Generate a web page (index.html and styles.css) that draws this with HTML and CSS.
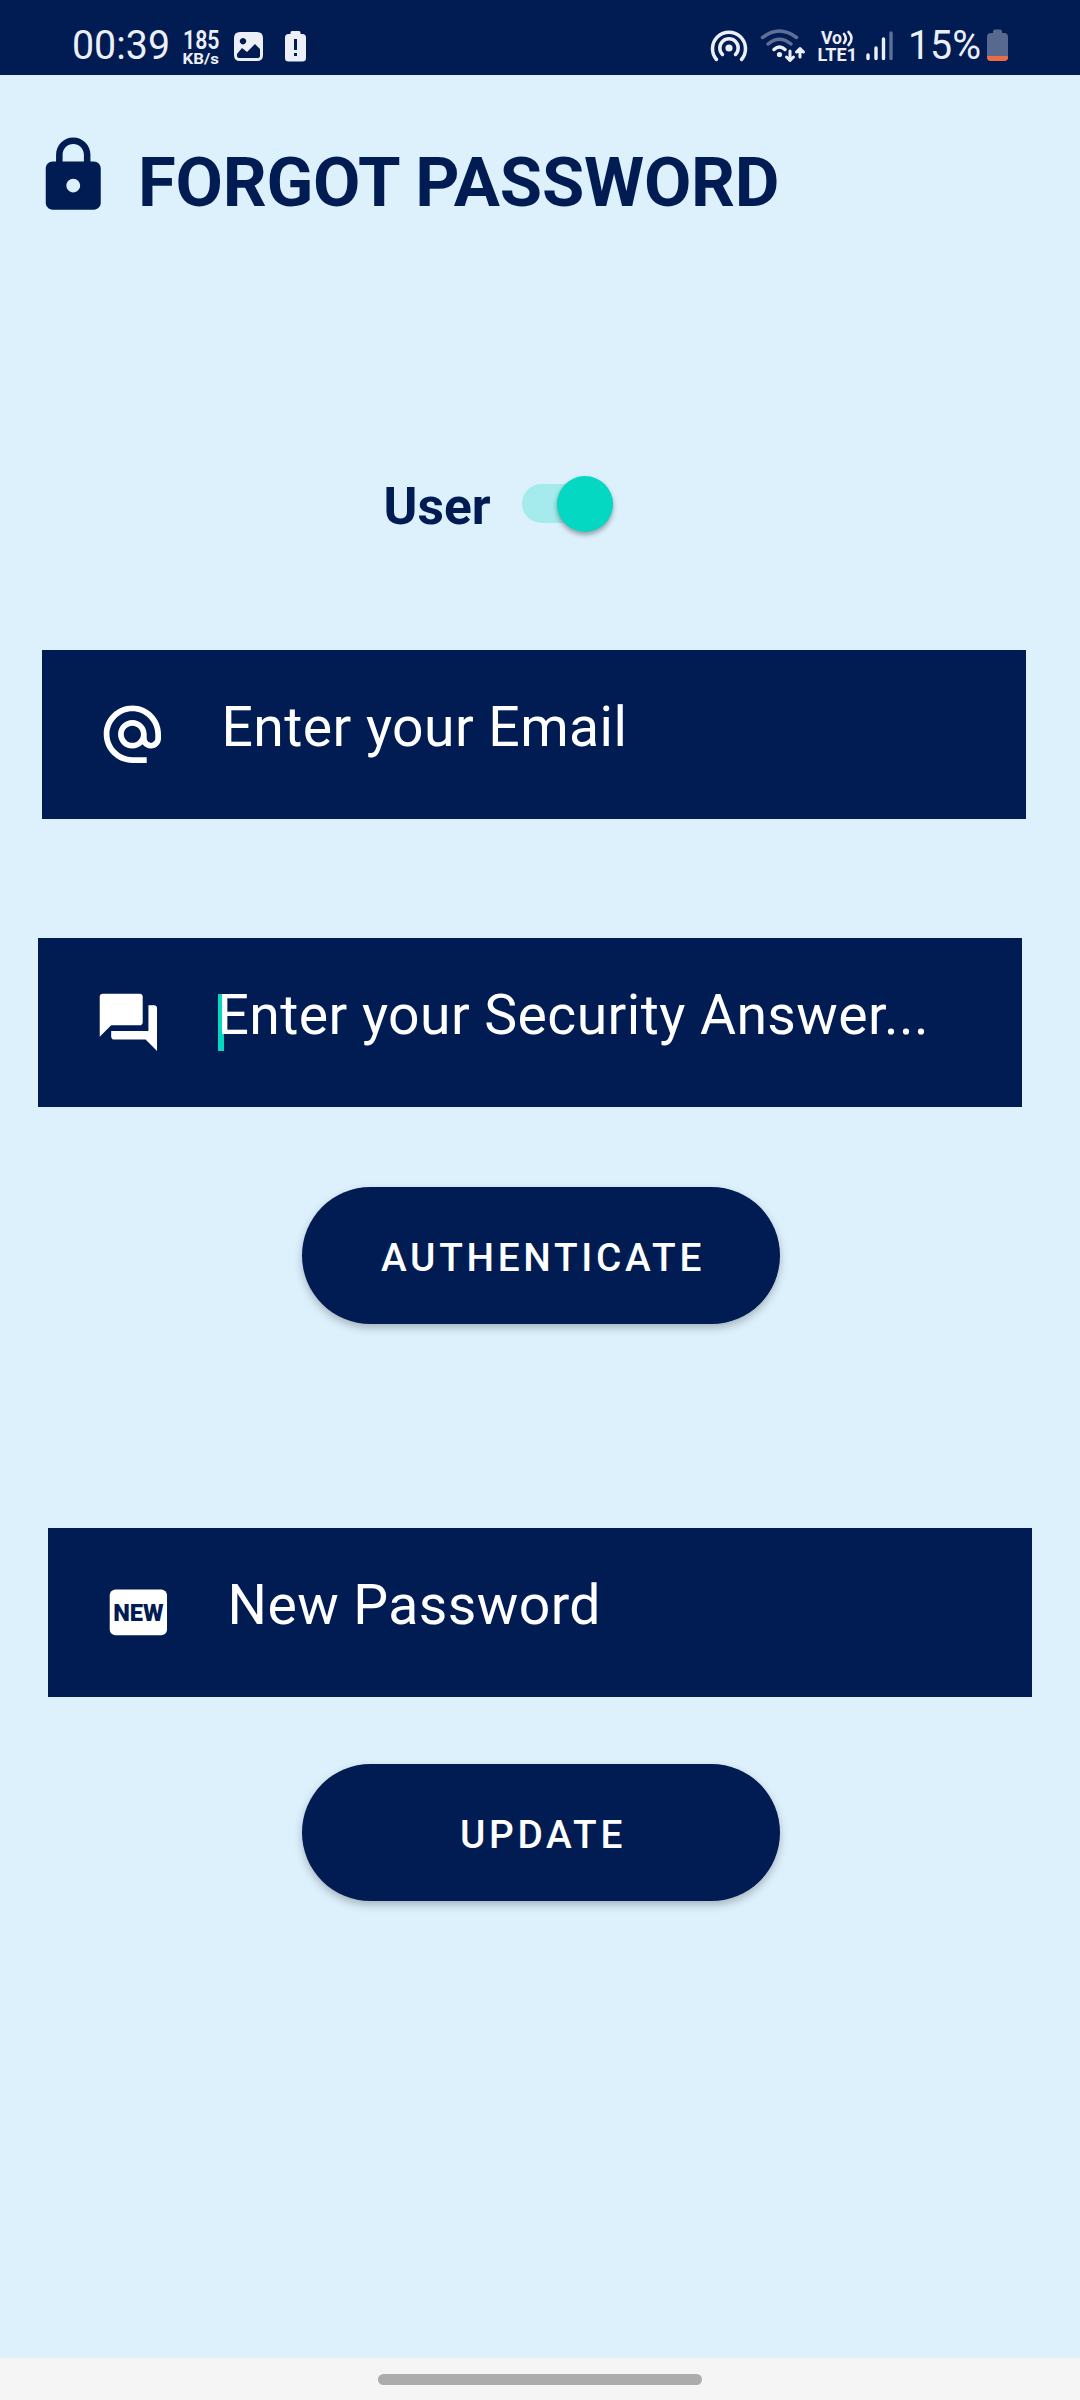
FILE: index.html
```html
<!DOCTYPE html>
<html lang="en">
<head>
<meta charset="utf-8">
<title>Forgot Password</title>
<link rel="stylesheet" href="styles.css">
</head>
<body>
<header class="status">
  <svg class="status-left" width="250" height="75" viewBox="60 0 250 75">
    <text x="72" y="59" font-size="40" textLength="98" lengthAdjust="spacingAndGlyphs">00:39</text>
    <text x="183" y="49" font-size="25.5" font-weight="600" textLength="36.500" lengthAdjust="spacingAndGlyphs">185</text>
    <text x="182.500" y="63.500" font-size="15" font-weight="700" textLength="36.500" lengthAdjust="spacingAndGlyphs">KB/s</text>
    <path fill-rule="evenodd" d="M240 32h17q6 0 6 6v17q0 6-6 6h-17q-6 0-6-6v-17q0-6 6-6zM243 38a3.200 3.200 0 1 0 .01 0zM237 54v2q0 2 2 2h19q2 0 2-2v-7l-5-5-8 8-5-4z"/>
    <path fill-rule="evenodd" d="M292 31h7q1.500 0 1.500 1.500V34h2q3.500 0 3.500 3.500V58q0 3.500-3.500 3.500h-14q-3.500 0-3.500-3.500V37.500q0-3.500 3.500-3.500h2v-1.500q0-1.500 1.500-1.500zM294 39v11h3V39zM294 53v3h3v-3z"/>
  </svg>
  <svg class="status-right" width="310" height="75" viewBox="705 0 310 75">
    <g class="line" stroke-width="3.500">
      <path d="M716.500 59.500A16.500 16.500 0 1 1 741.500 59.500"/>
      <path d="M722.500 54.500A9.200 9.200 0 1 1 735.500 54.500"/>
    </g>
    <circle cx="729" cy="48" r="3.600"/>
    <g class="line" stroke-width="3.500">
      <path class="dim" d="M762.500 37.500Q779.500 24.500 796.500 37.500M768 44Q779.500 34.500 791 44"/>
      <path d="M774 49.500Q779.500 44.500 785 49.500"/>
    </g>
    <circle cx="779.500" cy="54.500" r="2.600"/>
    <path class="line" stroke-width="3" d="M790 51v9M786.500 57l3.500 3.500 3.500-3.500M800 57V49M796.500 52l3.500-3.500 3.500 3.500"/>
    <text x="821" y="44" font-size="17.500" font-weight="700" textLength="21" lengthAdjust="spacingAndGlyphs">Vo</text>
    <path class="line" stroke-width="2.600" d="M844 34q3.500 4.500 0 9M848.500 32q6 6.500 0 13"/>
    <text x="817.500" y="61" font-size="18.500" font-weight="700" textLength="39.500" lengthAdjust="spacingAndGlyphs">LTE1</text>
    <path class="line" stroke-width="3.400" d="M868 55v3.500M876 48v10.500M883.500 39v19.500"/>
    <path class="line dim" stroke-width="3.400" d="M891 33v25.500"/>
    <text x="908" y="59" font-size="40" textLength="73" lengthAdjust="spacingAndGlyphs">15%</text>
    <path class="battery" d="M995 29.500h5q2 0 2 2V33h2q4 0 4 4v20q0 4-4 4h-13q-4 0-4-4V37q0-4 4-4h2v-1.500q0-2 2-2z"/>
    <path class="battery-level" d="M987 56h21v1q0 4-4 4h-13q-4 0-4-4z"/>
  </svg>
</header>

<main class="screen">
  <div class="heading">
    <svg class="lock" viewBox="0 0 24 24"><path d="M18 8h-1V6c0-2.760-2.240-5-5-5S7 3.240 7 6v2H6c-1.100 0-2 .9-2 2v10c0 1.100.9 2 2 2h12c1.100 0 2-.9 2-2V10c0-1.100-.9-2-2-2zm-6 9c-1.100 0-2-.9-2-2s.9-2 2-2 2 .9 2 2-.9 2-2 2zm3.100-9H8.900V6c0-1.710 1.390-3.100 3.100-3.100 1.710 0 3.100 1.390 3.100 3.100v2z"/></svg>
    <h1 class="title">FORGOT PASSWORD</h1>
  </div>

  <div class="role">
    <span class="role-label">User</span>
    <span class="switch"><span class="thumb"></span></span>
  </div>

  <div class="field field-email">
    <svg class="icon" viewBox="0 0 24 24"><path d="M12 1.950c-5.520 0-10 4.480-10 10s4.480 10 10 10h5v-2h-5c-4.340 0-8-3.660-8-8s3.660-8 8-8 8 3.660 8 8v1.430c0 .79-.71 1.570-1.500 1.570s-1.500-.78-1.500-1.570v-1.430c0-2.760-2.240-5-5-5s-5 2.240-5 5 2.240 5 5 5c1.380 0 2.640-.56 3.540-1.470.65.89 1.770 1.470 2.960 1.470 1.970 0 3.500-1.600 3.500-3.570v-1.430c0-5.520-4.480-10-10-10zm0 13c-1.660 0-3-1.340-3-3s1.340-3 3-3 3 1.340 3 3-1.340 3-3 3z"/></svg>
    <span class="hint">Enter your Email</span>
  </div>

  <div class="field field-answer">
    <svg class="icon" viewBox="0 0 24 24"><path d="M21 6h-2v9H6v2c0 .55.45 1 1 1h11l4 4V7c0-.55-.45-1-1-1zm-4 6V3c0-.55-.45-1-1-1H3c-.55 0-1 .45-1 1v14l4-4h10c.55 0 1-.45 1-1z"/></svg>
    <span class="hint focused">Enter your Security Answer...</span>
  </div>

  <button class="btn btn-auth">AUTHENTICATE</button>

  <div class="field field-new">
    <svg class="icon" viewBox="0 0 24 24"><rect x="2" y="4" width="20" height="16" rx="2"/><text class="badge" x="3.200" y="15" font-size="8.400" textLength="17.600" lengthAdjust="spacingAndGlyphs">NEW</text></svg>
    <span class="hint">New Password</span>
  </div>

  <button class="btn btn-update">UPDATE</button>
</main>

<footer class="nav"><span class="handle"></span></footer>
</body>
</html>
```
FILE: styles.css
```css
* { box-sizing: border-box; }

body {
  margin: 0;
  width: 1080px;
  height: 2400px;
  display: flex;
  flex-direction: column;
  background: #ddf1fd;
  color: #001c53;
  font-family: Roboto, "Liberation Sans", sans-serif;
}

.status {
  height: 75px;
  padding: 0 65px 0 60px;
  display: flex;
  justify-content: space-between;
  background: #001c53;
  fill: #eceff8;
}
.line { fill: none; stroke: #eceff8; stroke-linecap: round; stroke-linejoin: round; }
.dim { stroke: #5f6f99; }
.battery { fill: #586990; }
.battery-level { fill: #ed6c47; }

.screen {
  flex: 1;
  display: flex;
  flex-direction: column;
  align-items: flex-start;
}

.heading {
  display: flex;
  align-items: flex-start;
  padding: 59px 0 0 32px;
}
.lock { width: 82.5px; height: 82.5px; fill: #001c53; }
.title {
  margin: 8.5px 0 0 23.5px;
  font-size: 68.75px;
  line-height: 80px;
  font-weight: 700;
  letter-spacing: -0.25px;
  white-space: nowrap;
}

.role {
  display: flex;
  align-items: flex-start;
  margin: 255.5px 0 0 383.5px;
}
.role-label {
  width: 138.5px;
  font-size: 51.5px;
  line-height: 58px;
  font-weight: 700;
}
.switch {
  display: flex;
  justify-content: flex-end;
  align-items: center;
  width: 91px;
  height: 39px;
  margin-top: 6px;
  border-radius: 20px;
  background: #a5eaec;
}
.thumb {
  flex: none;
  width: 56px;
  height: 56px;
  border-radius: 50%;
  background: #04d8c3;
  box-shadow: 0 3px 5px rgba(0, 0, 0, 0.35);
}

.field {
  display: flex;
  align-items: flex-start;
  width: 984px;
  height: 169px;
  padding-left: 56px;
  background: #001c53;
  color: #fff;
}
.field-email { margin: 114px 0 0 42px; }
.field-answer { margin: 119px 0 0 38px; }
.field-new { margin: 204px 0 0 48px; }
.icon { width: 68.75px; height: 68.75px; margin-top: 50px; fill: #fff; }
.badge { fill: #001c53; font-weight: 900; }
.hint {
  position: relative;
  z-index: 0;
  margin: 46px 0 0 54.75px;
  font-size: 55.3px;
  line-height: 64px;
  letter-spacing: 0.43px;
  white-space: nowrap;
}
.focused::before {
  content: "";
  position: absolute;
  z-index: -1;
  left: 0.5px;
  top: 10px;
  width: 6px;
  height: 57px;
  background: #04d8c3;
}

.btn {
  width: 478px;
  height: 137px;
  margin-left: 302px;
  padding: 5px 0 0 4px;
  border: 0;
  border-radius: 69px;
  background: #001c53;
  color: #fff;
  font: 500 38.8px/46px Roboto, "Liberation Sans", sans-serif;
  letter-spacing: 3.7px;
  box-shadow: 0 4px 8px rgba(0, 0, 0, 0.25);
}
.btn-auth { margin-top: 80px; }
.btn-update { margin-top: 67px; }

.nav {
  height: 42px;
  padding-top: 16px;
  display: flex;
  justify-content: center;
  align-items: flex-start;
  background: #f5f5f5;
}
.handle { width: 324px; height: 11px; border-radius: 6px; background: #acacac; }
```
